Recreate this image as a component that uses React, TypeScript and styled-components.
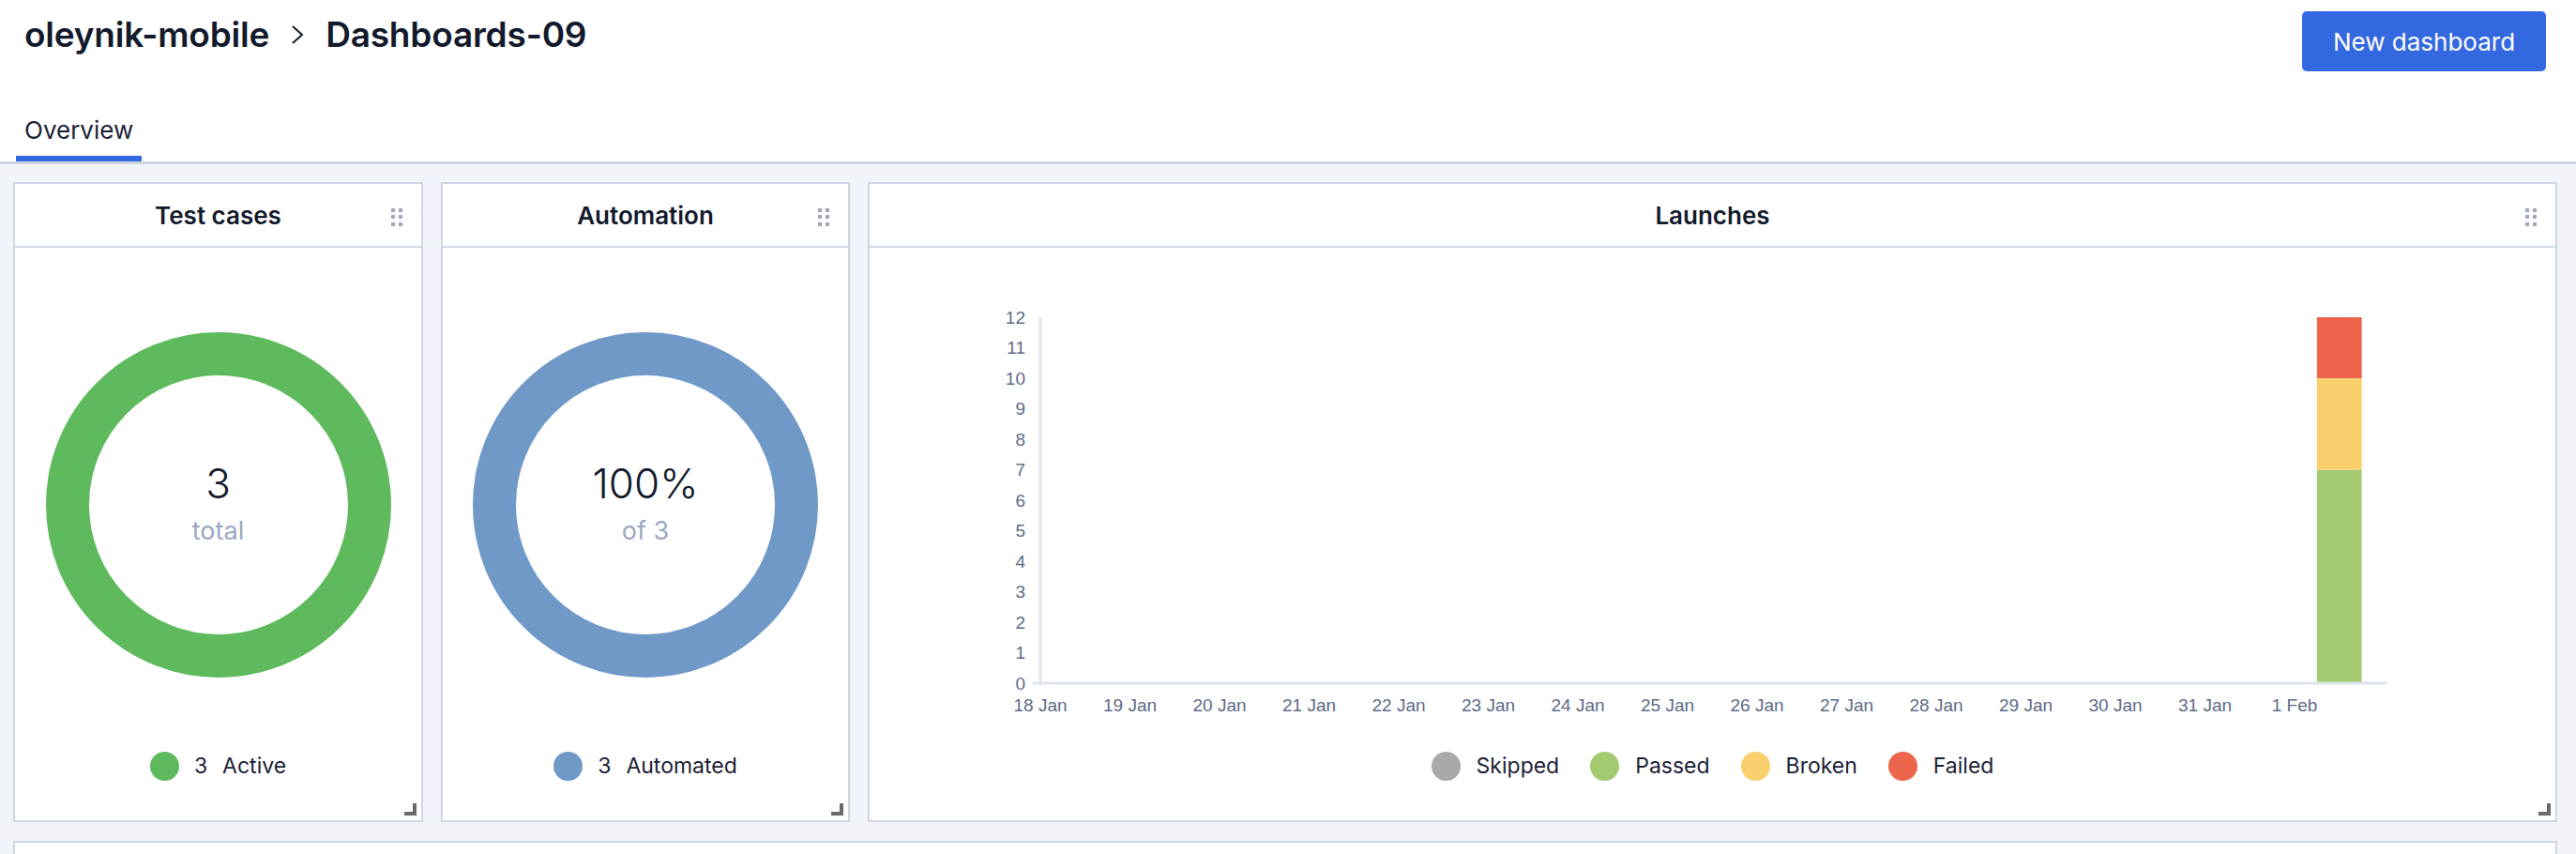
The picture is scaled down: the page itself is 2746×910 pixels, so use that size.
import React from "react";
import styled, { createGlobalStyle } from "styled-components";

const GlobalStyle = createGlobalStyle`
  html, body { margin: 0; padding: 0; background: #ffffff; }
  body { font-family: Inter, "Noto Sans", sans-serif; color: #131a2c; }
  * { box-sizing: border-box; }
`;

const Page = styled.div`
  width: 2746px;
  height: 910px;
  display: flex;
  flex-direction: column;
  overflow: hidden;
`;

const Header = styled.header`
  background: #ffffff;
  border-bottom: 3px solid #cfd6e2;
  flex: none;
`;

const TopRow = styled.div`
  height: 123px;
  display: flex;
  justify-content: space-between;
  align-items: flex-start;
  padding: 0 32px 0 26px;
`;

const Breadcrumbs = styled.h1`
  margin: 15px 0 0;
  display: flex;
  align-items: center;
  gap: 22px;
  font-size: 37px;
  line-height: 44px;
  font-weight: 600;
  letter-spacing: -0.2px;
  color: #131a2c;
`;

const Chevron = styled.svg`
  width: 16px;
  height: 22px;
  flex: none;
`;

const PrimaryButton = styled.button`
  margin-top: 12px;
  width: 260px;
  height: 64px;
  border: none;
  border-radius: 5px;
  background: #3468e0;
  color: #ffffff;
  font-family: Inter, sans-serif;
  font-size: 26px;
  font-weight: 400;
  cursor: pointer;
`;

const Tabs = styled.nav`
  display: flex;
  padding-left: 17px;
`;

const Tab = styled.div<{ $active?: boolean }>`
  padding: 0 9px 11px;
  font-size: 26px;
  line-height: 32px;
  font-weight: 400;
  color: #1b2236;
  border-bottom: 6px solid ${(p) => (p.$active ? "#3468e0" : "transparent")};
`;

const Main = styled.main`
  flex: 1;
  background: #f1f4f9;
  padding: 19px 20px 0 14px;
  display: grid;
  grid-template-columns: 437px 436px 1fr;
  grid-template-rows: 682px 400px;
  column-gap: 19px;
  row-gap: 20px;
`;

const Card = styled.section<{ $span?: boolean }>`
  position: relative;
  background: #ffffff;
  border: 2px solid #cdd6e2;
  display: flex;
  flex-direction: column;
  min-width: 0;
  ${(p) => (p.$span ? "grid-column: 1 / -1;" : "")}
`;

const CardHeader = styled.div`
  height: 68px;
  border-bottom: 2px solid #cdd6e2;
  display: grid;
  grid-template-columns: 1fr auto 1fr;
  align-items: center;
  padding: 0 20px 0 20px;
  flex: none;
`;

const CardTitle = styled.h2`
  grid-column: 2;
  margin: 0;
  padding-top: 2px;
  font-size: 26px;
  font-weight: 600;
  line-height: 32px;
  color: #131a2c;
`;

const DragHandle = styled.div`
  grid-column: 3;
  justify-self: end;
  display: grid;
  grid-template-columns: 4px 4px;
  grid-template-rows: repeat(3, 4px);
  column-gap: 4px;
  row-gap: 3.5px;
  margin-top: 4px;
`;

const HandleDot = styled.span`
  width: 4px;
  height: 4px;
  background: #9ea9bb;
`;

const ResizeCorner = styled.div`
  position: absolute;
  right: 5px;
  bottom: 5px;
  width: 13px;
  height: 13px;
  border-right: 4px solid #6a6a6a;
  border-bottom: 4px solid #6a6a6a;
`;

const DonutBody = styled.div`
  display: flex;
  flex-direction: column;
  align-items: center;
  padding-top: 90px;
`;

const DonutWrap = styled.div`
  display: grid;
  width: 368px;
  height: 368px;
  & > * {
    grid-area: 1 / 1;
  }
`;

const DonutCenter = styled.div`
  display: flex;
  flex-direction: column;
  align-items: center;
  justify-content: center;
  gap: 11px;
  padding-bottom: 4px;
`;

const BigValue = styled.div`
  font-size: 44px;
  line-height: 48px;
  font-weight: 300;
  color: #131a2c;
`;

const SubValue = styled.div`
  font-size: 27px;
  line-height: 32px;
  font-weight: 400;
  color: #9aa8c0;
`;

const Legend = styled.div<{ $gap: number; $top: number }>`
  display: flex;
  justify-content: center;
  align-items: center;
  gap: ${(p) => p.$gap}px;
  margin-top: ${(p) => p.$top}px;
  height: 32px;
`;

const LegendItem = styled.div<{ $gap: number }>`
  display: flex;
  align-items: center;
  gap: ${(p) => p.$gap}px;
  font-size: 23px;
  line-height: 32px;
  font-weight: 400;
  color: #1b2236;
`;

const Dot = styled.span<{ $color: string }>`
  width: 31px;
  height: 31px;
  border-radius: 50%;
  background: ${(p) => p.$color};
  flex: none;
`;

const ChartBody = styled.div`
  display: flex;
  flex-direction: column;
`;

const ChartSvg = styled.svg`
  display: block;
  width: 1797px;
  height: 536px;
`;

const Donut: React.FC<{ color: string; value: string; sub: string }> = ({ color, value, sub }) => (
  <DonutWrap>
    <svg width="368" height="368" viewBox="0 0 368 368">
      <circle cx="184" cy="184" r="161" fill="none" stroke={color} strokeWidth="46" />
    </svg>
    <DonutCenter>
      <BigValue>{value}</BigValue>
      <SubValue>{sub}</SubValue>
    </DonutCenter>
  </DonutWrap>
);

const Handle = () => (
  <DragHandle>
    {Array.from({ length: 6 }).map((_, i) => (
      <HandleDot key={i} />
    ))}
  </DragHandle>
);

const AXIS_X = 182;
const AXIS_BOTTOM = 464;
const UNIT = 32.5;
const DAY = 95.5;
const DATES = [
  "18 Jan", "19 Jan", "20 Jan", "21 Jan", "22 Jan", "23 Jan", "24 Jan", "25 Jan",
  "26 Jan", "27 Jan", "28 Jan", "29 Jan", "30 Jan", "31 Jan", "1 Feb",
];
const SEGMENTS = [
  { value: 7, color: "#a3ca70" },
  { value: 3, color: "#f9d06b" },
  { value: 2, color: "#ec654c" },
];

const LaunchesChart = () => {
  const barX = AXIS_X + 14.25 * DAY;
  const barW = 0.5 * DAY;
  let acc = 0;
  return (
    <ChartSvg viewBox="0 0 1797 536">
      {Array.from({ length: 13 }).map((_, v) => (
        <text
          key={v}
          x={166}
          y={AXIS_BOTTOM - v * UNIT}
          textAnchor="end"
          dominantBaseline="central"
          fontFamily='"Liberation Sans", Arial, sans-serif'
          fontSize="19"
          fill="#5d6b85"
        >
          {v}
        </text>
      ))}
      {SEGMENTS.map((s, i) => {
        const y0 = AXIS_BOTTOM - (acc + s.value) * UNIT;
        const h = s.value * UNIT;
        acc += s.value;
        return <rect key={i} x={barX} y={y0} width={barW} height={h} fill={s.color} />;
      })}
      <line x1={AXIS_X} y1={AXIS_BOTTOM - 12 * UNIT} x2={AXIS_X} y2={AXIS_BOTTOM + 1.5} stroke="#dfe4ec" strokeWidth="3" />
      <line x1={AXIS_X - 8} y1={AXIS_BOTTOM} x2={1618} y2={AXIS_BOTTOM} stroke="#dfe4ec" strokeWidth="3" />
      {DATES.map((d, i) => (
        <text
          key={d}
          x={AXIS_X + i * DAY}
          y={487}
          textAnchor="middle"
          dominantBaseline="central"
          fontFamily='"Liberation Sans", Arial, sans-serif'
          fontSize="19"
          fill="#5d6b85"
        >
          {d}
        </text>
      ))}
    </ChartSvg>
  );
};

export default function App() {
  return (
    <>
      <GlobalStyle />
      <Page>
        <Header>
          <TopRow>
            <Breadcrumbs>
              <span>oleynik-mobile</span>
              <Chevron viewBox="0 0 16 22">
                <polyline points="3,2 13,11 3,20" fill="none" stroke="#131a2c" strokeWidth="2" />
              </Chevron>
              <span>Dashboards-09</span>
            </Breadcrumbs>
            <PrimaryButton>New dashboard</PrimaryButton>
          </TopRow>
          <Tabs>
            <Tab $active>Overview</Tab>
          </Tabs>
        </Header>
        <Main>
          <Card>
            <CardHeader>
              <CardTitle>Test cases</CardTitle>
              <Handle />
            </CardHeader>
            <DonutBody>
              <Donut color="#5fba5e" value="3" sub="total" />
              <Legend $gap={32} $top={78}>
                <LegendItem $gap={16}>
                  <Dot $color="#5fba5e" />
                  <span>3</span>
                  <span>Active</span>
                </LegendItem>
              </Legend>
            </DonutBody>
            <ResizeCorner />
          </Card>
          <Card>
            <CardHeader>
              <CardTitle>Automation</CardTitle>
              <Handle />
            </CardHeader>
            <DonutBody>
              <Donut color="#7099c8" value="100%" sub="of 3" />
              <Legend $gap={32} $top={78}>
                <LegendItem $gap={16}>
                  <Dot $color="#7099c8" />
                  <span>3</span>
                  <span>Automated</span>
                </LegendItem>
              </Legend>
            </DonutBody>
            <ResizeCorner />
          </Card>
          <Card>
            <CardHeader>
              <CardTitle>Launches</CardTitle>
              <Handle />
            </CardHeader>
            <ChartBody>
              <LaunchesChart />
              <Legend $gap={33} $top={0}>
                <LegendItem $gap={17}>
                  <Dot $color="#a9a9a9" />
                  <span>Skipped</span>
                </LegendItem>
                <LegendItem $gap={17}>
                  <Dot $color="#a3ca70" />
                  <span>Passed</span>
                </LegendItem>
                <LegendItem $gap={17}>
                  <Dot $color="#f9d06b" />
                  <span>Broken</span>
                </LegendItem>
                <LegendItem $gap={17}>
                  <Dot $color="#ec654c" />
                  <span>Failed</span>
                </LegendItem>
              </Legend>
            </ChartBody>
            <ResizeCorner />
          </Card>
          <Card $span />
        </Main>
      </Page>
    </>
  );
}
